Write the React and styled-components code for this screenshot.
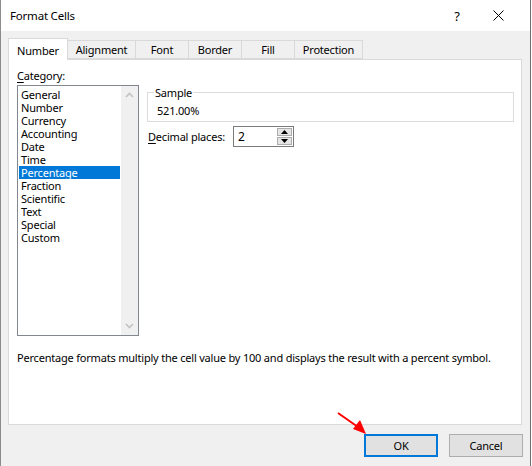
import React from 'react'
import styled, { createGlobalStyle } from 'styled-components'

const GlobalStyle = createGlobalStyle`
  html, body {
    margin: 0;
    padding: 0;
    background: #ffffff;
  }
  body {
    font-family: "Noto Sans", "Open Sans", sans-serif;
    font-size: 11px;
    letter-spacing: -0.2px;
    color: #000;
  }
  * { box-sizing: border-box; }
`

const Window = styled.div`
  position: relative;
  width: 531px;
  height: 466px;
  background: #f0f0f0;
  border-left: 1px solid #8c8c8c;
  border-right: 1px solid #6f6f6f;
  display: flex;
  flex-direction: column;
  overflow: hidden;
`

const TitleBar = styled.div`
  height: 31px;
  background: #ffffff;
  display: flex;
  align-items: center;
  padding-left: 9px;
  flex-shrink: 0;
`

const Title = styled.span`
  font-size: 11.5px;
  line-height: 15px;
`

const Controls = styled.div`
  margin-left: auto;
  display: flex;
  gap: 11px;
  padding-right: 17px;
`

const CtrlButton = styled.div`
  width: 30px;
  height: 31px;
  display: flex;
  align-items: center;
  justify-content: center;
  font-size: 13px;
`

const Body = styled.div`
  padding: 7px 0 0 7px;
  display: flex;
  flex-direction: column;
`

const TabRow = styled.div`
  display: flex;
  align-items: flex-end;
  height: 21px;
  position: relative;
  z-index: 1;
`

const Tab = styled.div`
  width: ${p => p.$w}px;
  height: ${p => (p.$active ? 22 : 19)}px;
  margin-left: ${p => (p.$first ? 0 : -1)}px;
  margin-bottom: ${p => (p.$active ? -1 : 0)}px;
  background: ${p => (p.$active ? '#ffffff' : '#f0f0f0')};
  border: 1px solid #d9d9d9;
  border-bottom: ${p => (p.$active ? 'none' : '1px solid #d9d9d9')};
  display: flex;
  justify-content: center;
  align-items: ${p => (p.$active ? 'flex-start' : 'center')};
  padding-top: ${p => (p.$active ? 4 : 0)}px;
  line-height: 15px;
  white-space: nowrap;
  position: relative;
  z-index: ${p => (p.$active ? 2 : 0)};
`

const Panel = styled.div`
  width: 514px;
  height: 366px;
  background: #ffffff;
  border: 1px solid #d9d9d9;
  padding: 8px 7px 0 8px;
  display: flex;
  flex-direction: column;
`

const TopRow = styled.div`
  display: flex;
  gap: 8px;
`

const LeftCol = styled.div`
  width: 122px;
  display: flex;
  flex-direction: column;
`

const Label = styled.div`
  line-height: 15px;
  margin-bottom: ${p => (p.$inline ? 0 : 2)}px;
  width: ${p => (p.$w ? `${p.$w}px` : 'auto')};
  white-space: nowrap;
  flex-shrink: 0;
`

const Key = styled.span`
  text-decoration: underline;
  text-underline-offset: 2px;
`

const ListBox = styled.div`
  height: 251px;
  border: 1px solid #828790;
  display: flex;
`

const Items = styled.div`
  flex: 1;
  padding: 2px 1px;
`

const Item = styled.div`
  height: 13px;
  line-height: 13px;
  padding-left: 2px;
  white-space: nowrap;
  background: ${p => (p.$selected ? '#0078d7' : 'transparent')};
  color: ${p => (p.$selected ? '#ffffff' : '#000000')};
`

const ScrollBar = styled.div`
  width: 17px;
  background: #f0f0f0;
  display: flex;
  flex-direction: column;
  justify-content: space-between;
  align-items: center;
  padding: 6px 0;
`

const RightCol = styled.div`
  flex: 1;
  padding-top: 17px;
  display: flex;
  flex-direction: column;
`

const Group = styled.fieldset`
  margin: 0;
  border: 1px solid #dcdcdc;
  padding: 0 6px 3px 6px;
  min-width: 0;
`

const Legend = styled.legend`
  padding: 0 1px;
  line-height: 15px;
`

const SampleValue = styled.div`
  margin: 3px 0 0 3px;
  line-height: 15px;
`

const DecimalRow = styled.div`
  margin-top: 4px;
  padding-left: 1px;
  display: flex;
  align-items: center;
  height: 21px;
`

const SpinBox = styled.div`
  width: 61px;
  height: 21px;
  border: 1px solid #7a7a7a;
  background: #fff;
  display: flex;
  align-items: center;
`

const SpinValue = styled.span`
  padding-left: 4px;
  line-height: 15px;
  font-size: 12px;
`

const SpinButtons = styled.div`
  margin-left: auto;
  width: 16px;
  height: 100%;
  display: flex;
  flex-direction: column;
  gap: 1px;
  padding: 1px 1px 1px 0;
`

const SpinBtn = styled.div`
  flex: 1;
  background: #e5e5e5;
  border: 1px solid #adadad;
  display: flex;
  align-items: center;
  justify-content: center;
`

const Description = styled.div`
  margin-top: 14px;
  line-height: 15px;
  white-space: nowrap;
`

const Footer = styled.div`
  display: flex;
  justify-content: flex-end;
  gap: 11px;
  padding: 9px 7px 0 0;
`

const Button = styled.div`
  width: 74px;
  height: 23px;
  background: #e1e1e1;
  border: ${p => (p.$default ? '2px solid #0078d7' : '1px solid #adadad')};
  display: flex;
  align-items: center;
  justify-content: center;
  line-height: 15px;
`

const Arrow = styled.svg`
  position: absolute;
  left: 330px;
  top: 405px;
  overflow: visible;
`

const tabs = [
  { label: 'Number', w: 60 },
  { label: 'Alignment', w: 69 },
  { label: 'Font', w: 54 },
  { label: 'Border', w: 54 },
  { label: 'Fill', w: 54 },
  { label: 'Protection', w: 69 },
]

const categories = [
  'General', 'Number', 'Currency', 'Accounting', 'Date', 'Time',
  'Percentage', 'Fraction', 'Scientific', 'Text', 'Special', 'Custom',
]

const Chevron = ({ up }) => (
  <svg width="9" height="6" viewBox="0 0 9 6">
    <polyline
      points={up ? '1,5 4.5,1.5 8,5' : '1,1 4.5,4.5 8,1'}
      fill="none"
      stroke="#c2c2c2"
      strokeWidth="1.6"
    />
  </svg>
)

const Triangle = ({ up }) => (
  <svg width="7" height="4" viewBox="0 0 7 4">
    <polygon points={up ? '0,4 3.5,0 7,4' : '0,0 7,0 3.5,4'} fill="#000" />
  </svg>
)

export default function App() {
  return (
    <>
      <GlobalStyle />
      <Window>
        <TitleBar>
          <Title>Format Cells</Title>
          <Controls>
            <CtrlButton>?</CtrlButton>
            <CtrlButton>
              <svg width="11" height="11" viewBox="0 0 11 11">
                <path d="M0.5 0.5 L10.5 10.5 M10.5 0.5 L0.5 10.5" stroke="#000" strokeWidth="1" />
              </svg>
            </CtrlButton>
          </Controls>
        </TitleBar>

        <Body>
          <TabRow>
            {tabs.map((t, i) => (
              <Tab key={t.label} $w={t.w} $first={i === 0} $active={i === 0}>
                {t.label}
              </Tab>
            ))}
          </TabRow>

          <Panel>
            <TopRow>
              <LeftCol>
                <Label><Key>C</Key>ategory:</Label>
                <ListBox>
                  <Items>
                    {categories.map(c => (
                      <Item key={c} $selected={c === 'Percentage'}>{c}</Item>
                    ))}
                  </Items>
                  <ScrollBar>
                    <Chevron up />
                    <Chevron />
                  </ScrollBar>
                </ListBox>
              </LeftCol>

              <RightCol>
                <Group>
                  <Legend>Sample</Legend>
                  <SampleValue>521.00%</SampleValue>
                </Group>
                <DecimalRow>
                  <Label $w={85} $inline><Key>D</Key>ecimal places:</Label>
                  <SpinBox>
                    <SpinValue>2</SpinValue>
                    <SpinButtons>
                      <SpinBtn><Triangle up /></SpinBtn>
                      <SpinBtn><Triangle /></SpinBtn>
                    </SpinButtons>
                  </SpinBox>
                </DecimalRow>
              </RightCol>
            </TopRow>

            <Description>
              Percentage formats multiply the cell value by 100 and displays the result with a percent symbol.
            </Description>
          </Panel>
        </Body>

        <Footer>
          <Button $default>OK</Button>
          <Button>Cancel</Button>
        </Footer>

        <Arrow width="40" height="32" viewBox="330 405 40 32">
          <line x1="337" y1="413" x2="357" y2="427" stroke="#ff0000" strokeWidth="2" />
          <polygon points="365,434 352,429 359,420" fill="#ff0000" />
        </Arrow>
      </Window>
    </>
  )
}
